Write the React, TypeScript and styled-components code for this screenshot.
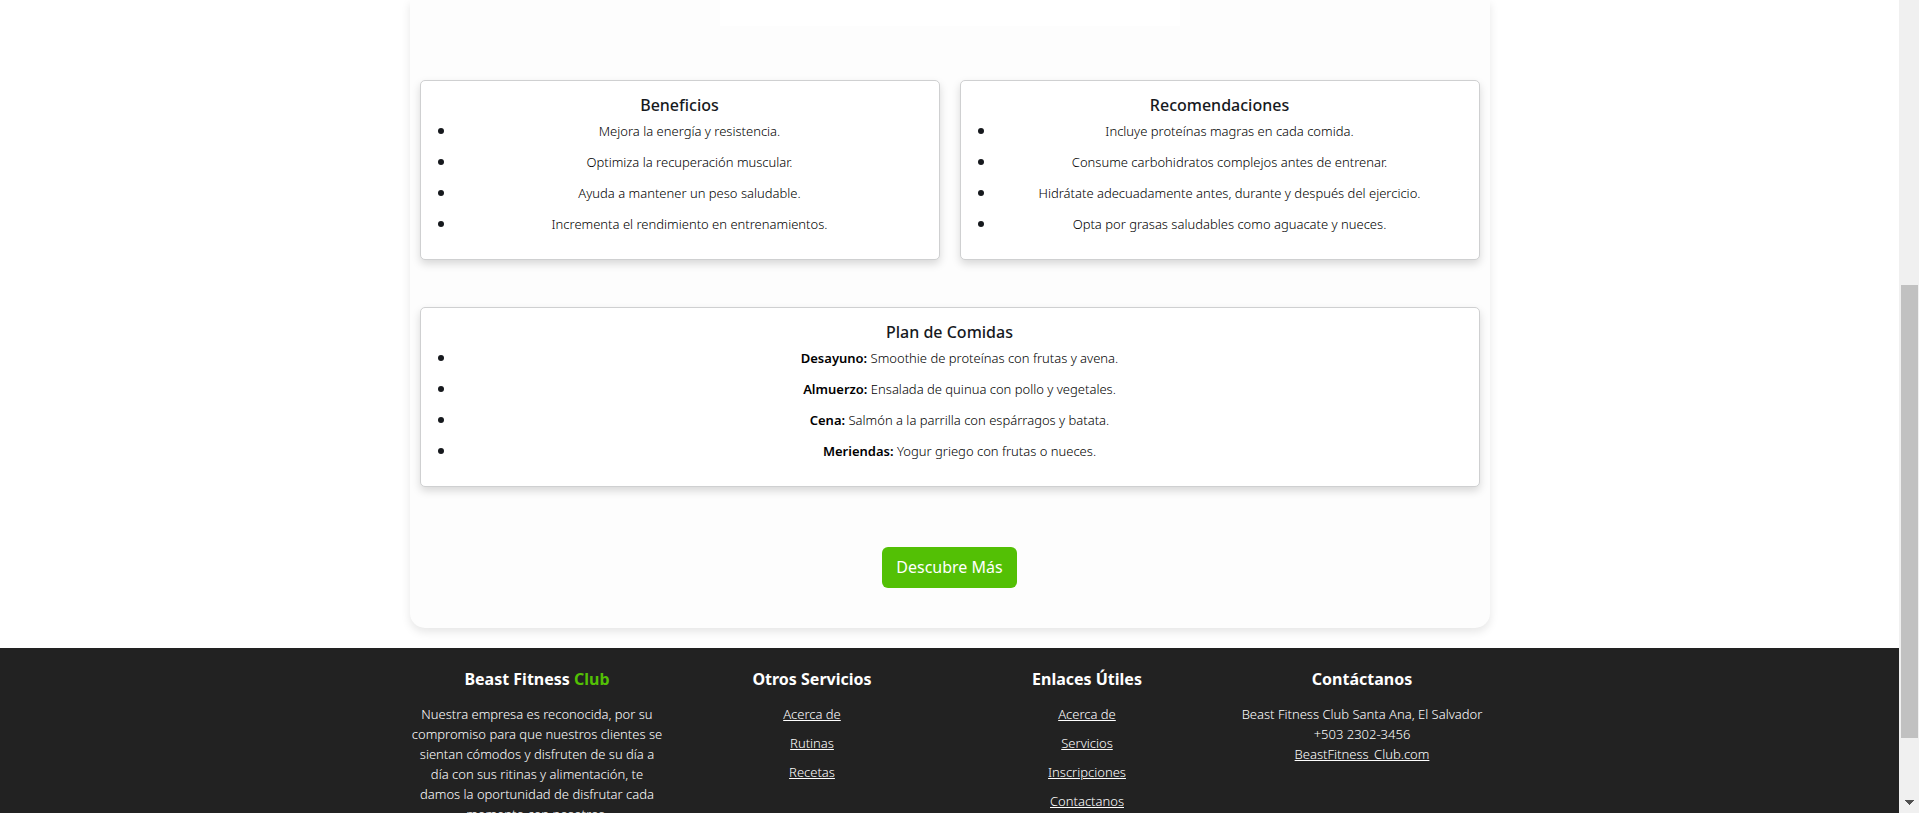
import React from "react";
import styled, { createGlobalStyle } from "styled-components";

const GlobalStyle = createGlobalStyle`
  *, *::before, *::after { box-sizing: border-box; }
  body {
    margin: 0;
    background: #fff;
    color: #16191d;
    font-family: "Segoe UI", "Noto Sans", "Open Sans", sans-serif;
    font-size: 16px;
  }
  h3, h4, p, ul { margin: 0; padding: 0; }
`;

const Shell = styled.div`
  display: grid;
  grid-template-columns: minmax(0, 1fr) 20px;
  height: 100vh;
  overflow: hidden;
`;

const Page = styled.div`
  display: flex;
  flex-direction: column;
  min-height: 0;
  overflow: hidden;
`;

const Panel = styled.main`
  flex: none;
  display: flex;
  flex-direction: column;
  align-items: center;
  width: 100%;
  max-width: 1080px;
  margin: 0 auto 20px;
  padding: 0 10px 40px;
  background: #fdfdfd;
  border-radius: 0 0 15px 15px;
  box-shadow: 0 4px 10px rgba(0, 0, 0, 0.1);
  text-align: center;
`;

const Figure = styled.div`
  width: 100%;
  max-width: 460px;
  height: 26px;
  margin-bottom: 54px;
  background: #fff;
`;

const Cards = styled.div`
  display: grid;
  grid-template-columns: repeat(2, minmax(0, 1fr));
  gap: 47px 20px;
  width: 100%;
  margin-bottom: 60px;
`;

const CardBox = styled.section<{ $wide?: boolean }>`
  grid-column: ${({ $wide }) => ($wide ? "1 / -1" : "auto")};
  padding: 14px 15px 15px;
  background: #fff;
  border: 1px solid #cfd0d1;
  border-radius: 5px;
  box-shadow: 0 4px 8px rgba(0, 0, 0, 0.15);
`;

const CardTitle = styled.h3`
  margin-bottom: 5px;
  font-size: 16px;
  font-weight: 500;
  line-height: 20px;
`;

const CardList = styled.ul`
  padding-left: 20px;
`;

const CardItem = styled.li`
  margin-bottom: 9px;
  line-height: 21px;
`;

const ItemText = styled.p`
  font-size: 13px;
  font-weight: 300;
  color: #000;

  strong {
    font-weight: 600;
  }
`;

const MoreButton = styled.button`
  padding: 10px 14px;
  border: 0;
  border-radius: 6px;
  background: #53c005;
  color: #fff;
  font-family: inherit;
  font-size: 16px;
  line-height: 21px;
  cursor: pointer;
`;

const FooterBar = styled.footer`
  flex: 1 0 auto;
  padding: 20px 0;
  background: #222;
  color: #fff;
`;

const FooterGrid = styled.div`
  display: grid;
  grid-template-columns: repeat(4, minmax(0, 1fr));
  width: 100%;
  max-width: 1100px;
  margin: 0 auto;
`;

const FooterColumn = styled.section`
  padding: 0 10px;
  font-size: 13px;
  font-weight: 300;
  line-height: 20px;
  text-align: center;
`;

const FooterTitle = styled.h4`
  margin-bottom: 14px;
  color: #fff;
  font-size: 16px;
  font-weight: 700;
  line-height: 22px;
`;

const Accent = styled.span`
  color: #53c005;
`;

const LinkList = styled.ul`
  display: flex;
  flex-direction: column;
  gap: 9px;
  list-style: none;
`;

const FooterLink = styled.a`
  color: inherit;
  text-decoration: underline;
`;

const Scrollbar = styled.div`
  display: flex;
  flex-direction: column;
  align-items: center;
  padding: 0 1px 8px 2px;
  background: #f0f0f0;
`;

const Track = styled.div<{ $share: number }>`
  flex: ${({ $share }) => $share} 0 0;
`;

const Thumb = styled.div<{ $share: number }>`
  flex: ${({ $share }) => $share} 0 0;
  width: 100%;
  background: #c1c1c1;
`;

type Entry = { label?: string; text: string };

function Card({ title, items, wide }: { title: string; items: Entry[]; wide?: boolean }) {
  return (
    <CardBox $wide={wide}>
      <CardTitle>{title}</CardTitle>
      <CardList>
        {items.map(({ label, text }) => (
          <CardItem key={text}>
            <ItemText>
              {label && <strong>{label}</strong>}
              {label && " "}
              {text}
            </ItemText>
          </CardItem>
        ))}
      </CardList>
    </CardBox>
  );
}

function Links({ title, names }: { title: string; names: string[] }) {
  return (
    <FooterColumn>
      <FooterTitle>{title}</FooterTitle>
      <LinkList>
        {names.map((name) => (
          <li key={name}>
            <FooterLink href="#">{name}</FooterLink>
          </li>
        ))}
      </LinkList>
    </FooterColumn>
  );
}

const benefits: Entry[] = [
  { text: "Mejora la energía y resistencia." },
  { text: "Optimiza la recuperación muscular." },
  { text: "Ayuda a mantener un peso saludable." },
  { text: "Incrementa el rendimiento en entrenamientos." },
];

const advice: Entry[] = [
  { text: "Incluye proteínas magras en cada comida." },
  { text: "Consume carbohidratos complejos antes de entrenar." },
  { text: "Hidrátate adecuadamente antes, durante y después del ejercicio." },
  { text: "Opta por grasas saludables como aguacate y nueces." },
];

const meals: Entry[] = [
  { label: "Desayuno:", text: "Smoothie de proteínas con frutas y avena." },
  { label: "Almuerzo:", text: "Ensalada de quinua con pollo y vegetales." },
  { label: "Cena:", text: "Salmón a la parrilla con espárragos y batata." },
  { label: "Meriendas:", text: "Yogur griego con frutas o nueces." },
];

export default function App() {
  return (
    <>
      <GlobalStyle />
      <Shell>
        <Page>
          <Panel>
            <Figure />
            <Cards>
              <Card title="Beneficios" items={benefits} />
              <Card title="Recomendaciones" items={advice} />
              <Card title="Plan de Comidas" items={meals} wide />
            </Cards>
            <MoreButton type="button">Descubre Más</MoreButton>
          </Panel>
          <FooterBar>
            <FooterGrid>
              <FooterColumn>
                <FooterTitle>
                  Beast Fitness <Accent>Club</Accent>
                </FooterTitle>
                <p>
                  Nuestra empresa es reconocida, por su compromiso para que nuestros clientes se
                  sientan cómodos y disfruten de su día a día con sus ritinas y alimentación, te
                  damos la oportunidad de disfrutar cada momento con nosotros.
                </p>
              </FooterColumn>
              <Links title="Otros Servicios" names={["Acerca de", "Rutinas", "Recetas"]} />
              <Links
                title="Enlaces Útiles"
                names={["Acerca de", "Servicios", "Inscripciones", "Contactanos"]}
              />
              <FooterColumn>
                <FooterTitle>Contáctanos</FooterTitle>
                <p>Beast Fitness Club Santa Ana, El Salvador</p>
                <p>+503 2302-3456</p>
                <p>
                  <FooterLink href="#">BeastFitness_Club.com</FooterLink>
                </p>
              </FooterColumn>
            </FooterGrid>
          </FooterBar>
        </Page>
        <Scrollbar aria-hidden="true">
          <Track $share={285} />
          <Thumb $share={453} />
          <Track $share={62} />
          <svg width="9" height="5" viewBox="0 0 9 5" shapeRendering="crispEdges">
            <path d="M0 0h9v1H8v1H7v1H6v1H5v1H4V4H3V3H2V2H1V1H0z" fill="#505050" />
          </svg>
        </Scrollbar>
      </Shell>
    </>
  );
}
